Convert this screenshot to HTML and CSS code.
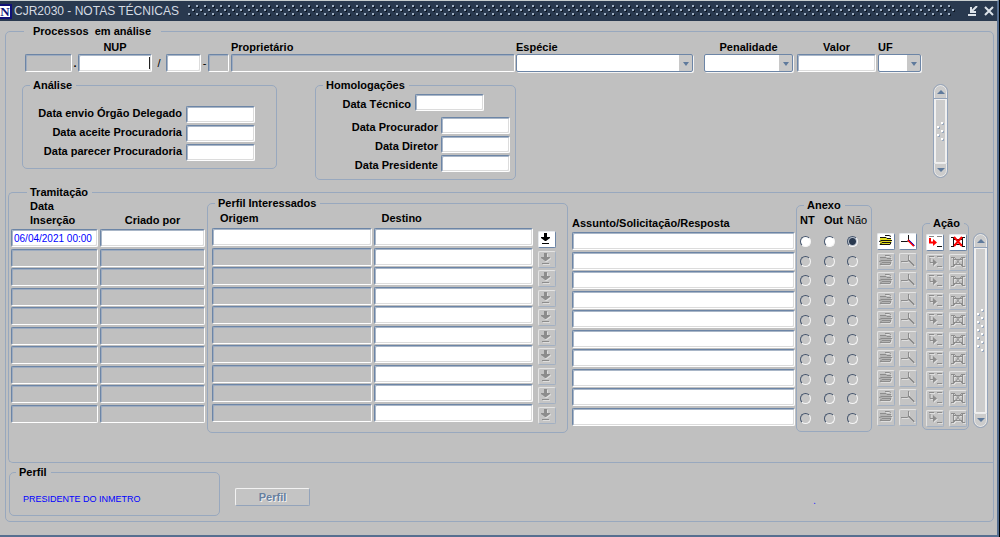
FILE: index.html
```html
<!DOCTYPE html>
<html lang="pt-BR">
<head>
<meta charset="utf-8">
<title>CJR2030 - NOTAS TÉCNICAS</title>
<link rel="stylesheet" href="styles.css">
</head>
<body>
<svg class="sprite" aria-hidden="true">
  <symbol id="i-down" viewBox="0 0 16 15">
    <path class="ink" d="M5 1h3v4h3v1L7 9H6L2 6V5h3zM3 11h7v1H3z"/>
  </symbol>
  <symbol id="i-folder" viewBox="0 0 16 15">
    <path class="fill" d="M2 10V3h6l1 1h4v2h1l-2 5H2z"/>
    <path class="line" d="M7 1.500h4l2 1M2 3.500h6l1 1h4M3 6.500h11M1 7.500l3-1M2 10.500l2-2h9l-1 2z"/>
  </symbol>
  <symbol id="i-branch" viewBox="0 0 16 15">
    <path class="line" d="M8.500 1v6M1 7.500h6l2-1"/>
    <path class="red" d="M8 6l6 6"/>
    <path class="blue" d="M9 6l5.500 5.500"/>
  </symbol>
  <symbol id="i-insert" viewBox="0 0 16 15">
    <path class="faint" d="M2 1.500h5M10 1.500h5"/>
    <path class="line" d="M10 11.500h5"/>
    <path class="red" d="M3 3v4.500h4"/>
    <path class="redfill" d="M6 4l4 3.500L6 11z"/>
  </symbol>
  <symbol id="i-delete" viewBox="0 0 16 15">
    <path class="line" d="M1 2.500h3M12 2.500h3M3.500 3v8M12.500 3v8M1 11.500h3M12 11.500h3M4 4.500h9M4 9.500h9"/>
    <path class="red" d="M4 2l8 9M12 2l-8 9"/>
  </symbol>
</svg>

<div class="window">
  <header class="titlebar">
    <span class="app-icon">N</span>
    <h1 class="title">CJR2030 - NOTAS TÉCNICAS</h1>
    <span class="bumps"></span>
    <button class="win-btn" type="button" aria-label="Minimizar">
      <svg width="10" height="10" viewBox="0 0 10 10"><path d="M9 0L4 5M3 1v5h5M0 9h8" fill="none" stroke="#dde3ea" stroke-width="2"/></svg>
    </button>
    <button class="win-btn" type="button" aria-label="Fechar">
      <svg width="10" height="10" viewBox="0 0 10 10"><path d="M1 1l8 8M9 1L1 9" fill="none" stroke="#dde3ea" stroke-width="2"/></svg>
    </button>
  </header>

  <form class="main">
    <fieldset class="group process">
      <legend class="legend-wide">Processos&nbsp; em análise</legend>

      <div class="id-row">
        <input class="field w-prefix" type="text" aria-label="Prefixo" disabled>
        <span class="sep sep-dot">.</span>
        <div class="stack centered w-nup"><label for="nup">NUP</label><input id="nup" class="field caret" type="text"></div>
        <span class="sep sep-slash">/</span>
        <input class="field w-year" type="text" aria-label="Ano">
        <span class="sep sep-dash">-</span>
        <input class="field w-digit" type="text" aria-label="Dígito" disabled>
        <div class="stack owner"><label for="prop">Proprietário</label><input id="prop" class="field" type="text" disabled></div>
        <div class="stack species"><label for="esp">Espécie</label><span class="combo"><select id="esp"><option></option></select></span></div>
        <div class="stack centered penalty"><label for="pen">Penalidade</label><span class="combo"><select id="pen"><option></option></select></span></div>
        <div class="stack centered amount"><label for="val">Valor</label><input id="val" class="field" type="text"></div>
        <div class="stack state"><label for="uf">UF</label><span class="combo"><select id="uf"><option></option></select></span></div>
      </div>

      <div class="dates-row">
        <fieldset class="group analysis">
          <legend>Análise</legend>
          <div class="analysis-grid">
            <label for="d1">Data envio Órgão Delegado</label><input id="d1" class="field date" type="text">
            <label for="d2">Data aceite Procuradoria</label><input id="d2" class="field date" type="text">
            <label for="d3">Data parecer Procuradoria</label><input id="d3" class="field date" type="text">
          </div>
        </fieldset>
        <fieldset class="group approvals">
          <legend>Homologações</legend>
          <div class="approval-first"><label for="h1">Data Técnico</label><input id="h1" class="field date" type="text"></div>
          <div class="approval-grid">
            <label for="h2">Data Procurador</label><input id="h2" class="field date" type="text">
            <label for="h3">Data Diretor</label><input id="h3" class="field date" type="text">
            <label for="h4">Data Presidente</label><input id="h4" class="field date" type="text">
          </div>
        </fieldset>
        <div class="scroll scroll-short"><button type="button" class="up" aria-label="Acima"></button><span class="thumb"><i class="grip"></i></span><button type="button" class="down" aria-label="Abaixo"></button></div>
      </div>

      <fieldset class="group flow">
        <legend>Tramitação</legend>
        <div class="flow-cols">
          <div class="col col-date">
            <div class="head head-two">Data<br>Inserção</div>
            <div class="list" data-kind="data"></div>
          </div>
          <div class="col col-author">
            <div class="head head-one">Criado por</div>
            <div class="list" data-kind="criado"></div>
          </div>
          <fieldset class="group inner interested">
            <legend>Perfil Interessados</legend>
            <div class="interested-cols">
              <div class="col grow"><div class="head">Origem</div><div class="list" data-kind="origem"></div></div>
              <div class="col grow"><div class="head">Destino</div><div class="list" data-kind="destino"></div></div>
              <div class="list small-list pick" data-kind="down"></div>
            </div>
          </fieldset>
          <div class="col subject">
            <div class="head">Assunto/Solicitação/Resposta</div>
            <div class="list" data-kind="assunto"></div>
          </div>
          <fieldset class="group inner attach">
            <legend>Anexo</legend>
            <div class="attach-head"><span>NT</span><span>Out</span><span class="plain">Não</span></div>
            <div class="list radio-list" data-kind="anexo"></div>
          </fieldset>
          <div class="list small-list tools" data-kind="tools"></div>
          <fieldset class="group inner action">
            <legend>Ação</legend>
            <div class="list small-list" data-kind="acao"></div>
          </fieldset>
          <div class="scroll scroll-long"><button type="button" class="up" aria-label="Acima"></button><span class="thumb"><i class="grip"></i></span><button type="button" class="down" aria-label="Abaixo"></button></div>
        </div>
      </fieldset>

      <div class="bottom-row">
        <fieldset class="group profile">
          <legend>Perfil</legend>
          <div class="profile-name">PRESIDENTE DO INMETRO</div>
        </fieldset>
        <button class="profile-btn" type="button" disabled>Perfil</button>
        <span class="status">.</span>
      </div>
    </fieldset>
  </form>
</div>
<script src="rows.js"></script>
</body>
</html>
```
FILE: styles.css
```css
* { box-sizing: border-box; }

body {
  margin: 0;
  border-right: 1px solid #000;
  background: #c0c0c0;
  color: #000;
  font: bold 11px/14px "Liberation Sans", Arial, sans-serif;
}

.sprite { display: none; }

.window {
  min-height: 100vh;
  display: flex;
  flex-direction: column;
  border-top: 1px solid #c9cfd0;
  border-right: 2px solid #566f90;
  border-bottom: 2px solid #566f90;
}

/* Title bar */
.titlebar {
  display: flex;
  align-items: center;
  height: 20px;
  background: #29394f;
}
.app-icon {
  width: 12px;
  height: 15px;
  border: 2px solid #101078;
  border-left-width: 0;
  background: #fff;
  color: #101078;
  font: bold 13px/11px "Liberation Serif", serif;
  text-align: center;
}
.title {
  margin: 0 9px 0 2px;
  color: #d5dbe3;
  font-size: 12px;
  font-weight: normal;
}
.bumps {
  flex: 1;
  height: 12px;
  margin-right: 9px;
  background-image:
    radial-gradient(circle at 1px 1px, #9fb0c4 0 1px, transparent 1px),
    radial-gradient(circle at 2px 2px, #0d1724 0 1px, transparent 1px),
    radial-gradient(circle at 1px 1px, #9fb0c4 0 1px, transparent 1px),
    radial-gradient(circle at 2px 2px, #0d1724 0 1px, transparent 1px);
  background-size: 8px 8px;
  background-position: 0 0, 0 0, 4px 4px, 4px 4px;
}
.win-btn {
  width: 16px;
  height: 14px;
  padding: 0;
  border: 0;
  background: none;
  line-height: 0;
}

/* Framed groups */
.main { flex: 1; padding: 3px 3px 0 5px; }
.group {
  min-width: 0;
  margin: 0;
  padding: 0;
  border: 1px solid #98a8be;
  border-radius: 5px;
}
.group > legend { margin-left: 7px; padding: 0 4px 0 3px; }
.group > .legend-wide { margin-left: 18px; padding: 0 10px 0 9px; }
.inner > legend { line-height: 8px; }

/* Fields */
.field {
  display: block;
  width: 100%;
  height: 18px;
  padding: 0;
  border: 1px solid #fff;
  border-top-color: #6c85a6;
  border-left-color: #6c85a6;
  border-radius: 2px;
  outline: 0;
  background: #fff;
  box-shadow: inset 1px 1px #a9b6c7, inset -1px -1px #dcdcdc;
  color: #00f;
  font: 10px/14px "Liberation Sans", Arial, sans-serif;
}
.field:disabled { background: #c0c0c0; box-shadow: inset 1px 1px #9dabbf; }
.caret {
  background: linear-gradient(#222, #222) right 1px center / 1px 12px no-repeat #fff;
}
.col-date .field { padding-left: 2px; }
.combo { position: relative; display: block; }
.combo select {
  appearance: none;
  display: block;
  width: 100%;
  height: 18px;
  border: 1px solid #6c85a6;
  border-radius: 2px;
  background: linear-gradient(#c8c8c8, #c8c8c8) right / 13px 100% no-repeat #fff;
  box-shadow: 1px 1px #f4f4f4;
}
.combo::after {
  content: "";
  position: absolute;
  right: 4px;
  top: 8px;
  border: 3px solid transparent;
  border-top: 4px solid #5f7a9c;
  border-bottom: 0;
}

.id-row { display: flex; align-items: flex-end; padding: 2px 72px 0 19px; }
.id-row > * { flex: none; }
.stack { display: flex; flex-direction: column; }
.centered { text-align: center; }
.w-prefix { width: 47px; }
.w-nup { width: 74px; }
.w-year { width: 35px; }
.w-digit { width: 21px; margin-right: 2px; }
.sep { text-align: center; padding-bottom: 2px; }
.sep-dot { width: 6px; }
.sep-slash { width: 14px; font-weight: normal; }
.sep-dash { width: 7px; font-weight: normal; }
.id-row > .owner { flex: 1 1 284px; margin-right: 1px; }
.id-row > .species { flex: 1 1 177px; margin-right: 11px; }
.penalty { width: 89px; margin-right: 4px; }
.amount { width: 79px; margin-right: 2px; }
.state { width: 43px; }

.dates-row { display: flex; align-items: flex-start; min-height: 101px; margin-top: 6px; padding: 0 45px 0 16px; }
.date { width: 69px; height: 17px; }
.analysis { width: 255px; }
.analysis-grid { display: grid; grid-template-columns: 1fr auto; gap: 2px 4px; padding: 14px 21px 7px 0; text-align: right; }
.approvals { width: 201px; margin-left: 38px; }
.approval-first { display: flex; gap: 4px; justify-content: flex-end; padding: 2px 31px 6px 0; }
.approval-grid { display: grid; grid-template-columns: 1fr auto; gap: 2px 3px; padding: 0 5px 7px 0; text-align: right; }
.approvals label { padding-top: 3px; }

/* Scroll bars */
.scroll {
  display: flex;
  flex-direction: column;
  flex: none;
  width: 15px;
  border: 1px solid #93a3ba;
  border-radius: 8px;
  overflow: hidden;
}
.scroll-short { height: 94px; margin: 6px 0 0 auto; }
.scroll-long { height: 195px; margin: 34px 0 0 4px; }
.scroll button {
  display: flex;
  align-items: center;
  justify-content: center;
  height: 14px;
  padding: 0;
  border: 1px solid #ececec;
  border-radius: 7px 7px 0 0;
  background: #ccc;
}
.scroll .down { border-radius: 0 0 7px 7px; }
.scroll button::before { content: ""; border: 4px solid transparent; }
.scroll .up::before { border-top-width: 0; border-bottom-color: #5f7a9c; }
.scroll .down::before { border-bottom-width: 0; border-top-color: #5f7a9c; }
.thumb {
  flex: 1;
  display: flex;
  align-items: center;
  justify-content: center;
  border: solid #f0f0f0;
  border-width: 1px 2px;
  background: #ccc;
  outline: 1px solid #93a3ba;
}
.grip {
  width: 7px;
  height: 19px;
  background-image:
    radial-gradient(circle at 1px 1px, #fff 0 1px, transparent 1px),
    radial-gradient(circle at 2px 2px, #98a8be 0 1px, transparent 1px),
    radial-gradient(circle at 1px 1px, #fff 0 1px, transparent 1px),
    radial-gradient(circle at 2px 2px, #98a8be 0 1px, transparent 1px);
  background-size: 8px 8px;
  background-position: 4px 0, 4px 0, 0 4px, 0 4px;
}
.scroll-long .grip { height: 43px; }

/* Tramitação */
.flow { margin: 5px 0 0 2px; border-right: 0; border-radius: 5px 0 0 5px; }
.group.flow > legend { margin-left: 18px; }
.flow-cols { display: flex; align-items: flex-start; padding: 0 5px 29px 2px; }
.flow-cols > * { flex: none; }
.list { display: flex; flex-direction: column; justify-content: space-between; height: 194px; }
.head { padding-left: 8px; white-space: nowrap; }
.col-date { width: 87px; margin-right: 2px; }
.head-two { padding: 0 0 2px 19px; }
.col-author { width: 105px; margin-right: 2px; }
.head-one { padding: 14px 0 2px; text-align: center; }
.flow-cols > .interested { flex: 1 1 361px; }
.interested-cols { display: flex; align-items: flex-start; gap: 2px; padding: 4px 11px 8px 4px; }
.grow { flex: 1; min-width: 0; }
.interested .head { padding-bottom: 3px; }
.small-list { height: 193px; flex: none; }
.pick { margin: 20px 0 0 3px; }
.flow-cols > .subject { flex: 1 1 223px; margin: 17px 1px 0 4px; }
.subject .head { padding: 0 0 2px; }
.attach { width: 76px; margin-top: 2px; }
.attach-head { display: grid; grid-template-columns: 24px 23px auto; padding: 4px 0 9px 3px; }
.plain { font-weight: normal; }
.radio-list { height: 188px; margin: 0 0 7px 3px; }
.radio-row { display: grid; grid-template-columns: 24px 23px auto; }
.radio-row input {
  appearance: none;
  width: 11px;
  height: 11px;
  margin: 0;
  border: 1px solid #f6f6f6;
  border-top-color: #44546c;
  border-left-color: #44546c;
  border-radius: 50%;
  background: #fff;
}
.radio-row input:disabled { background: #c6c6c6; }
.radio-row input:checked { background: radial-gradient(circle, #29394f 0 3px, #b8c0cc 4px); }
.tools { margin: 34px 5px 0; }
.btn-row { display: flex; gap: 4px; }
.action { width: 47px; margin-top: 20px; }
.action .small-list { margin: 7px 0 2px 3px; }
.action .btn-row { gap: 5px; }

.icon-btn {
  width: 18px;
  height: 17px;
  padding: 0;
  border: 1px solid #e6e9ed;
  border-right-color: #6c85a6;
  border-bottom-color: #6c85a6;
  border-radius: 2px;
  background: #fff;
  line-height: 0;
}
.icon-btn svg { width: 16px; height: 15px; fill: none; }
.ink { fill: #000; }
.fill { fill: #e3dc1c; }
.line { stroke: #111; }
.faint { stroke: #888; }
.red { stroke: #f00; stroke-width: 2; }
.blue { stroke: #1717d0; }
.redfill { fill: #f00; }
.icon-btn:disabled { border-color: #e4e4e4 #a3b0c2 #a3b0c2 #e4e4e4; background: #c4c4c4; }
.icon-btn:disabled svg { filter: drop-shadow(1px 1px 0 #dedede); }

/* Footer */
.bottom-row { display: flex; align-items: flex-start; padding: 2px 0 5px 3px; }
.profile { width: 211px; height: 51px; }
.group.profile > legend { margin-left: 6px; }
.profile-name { padding: 13px 0 0 13px; color: #00f; font: 9px/14px "Liberation Sans", Arial, sans-serif; }
.profile-btn {
  width: 75px;
  height: 18px;
  margin: 23px 0 0 15px;
  padding: 0;
  border: 1px solid #f2f2f2;
  border-right-color: #93a3ba;
  border-bottom-color: #93a3ba;
  border-radius: 2px;
  background: #c4c4c4;
  color: #667f9f;
  font: inherit;
  text-shadow: 1px 1px #f0f0f0;
}
.status { margin: 28px 177px 0 auto; color: #33f; font-weight: normal; }
```
FILE: rows.js
```js
const ROWS = 10;

const field = (label, on, value = "") =>
  `<input class="field" type="text" aria-label="${label}" value="${value}"${on ? "" : " disabled"}>`;

// Disabled buttons draw every stroke of the icon in one grey.
const icon = (id, on) => {
  let art = document.getElementById("i-" + id).innerHTML;
  if (!on) {
    art = art
      .replace(/class="(ink|redfill)"/g, 'fill="#8c8c8c"')
      .replace(/class="fill"/g, 'fill="#b4b4b4"')
      .replace(/class="\w+"/g, 'stroke="#8c8c8c"');
  }
  return `<svg viewBox="0 0 16 15">${art}</svg>`;
};
const button = (id, label, on) =>
  `<button class="icon-btn" type="button" aria-label="${label}"${on ? "" : " disabled"}>${icon(id, on)}</button>`;

const kinds = {
  data: i => field("Data Inserção", i === 0, i === 0 ? "06/04/2021 00:00" : ""),
  criado: i => field("Criado por", i === 0),
  origem: i => field("Origem", i === 0),
  destino: () => field("Destino", true),
  assunto: () => field("Assunto/Solicitação/Resposta", true),
  down: i => button("down", "Escolher destino", i === 0),
  anexo: i => `<div class="radio-row">` + ["NT", "Out", "Não"].map((n, k) =>
    `<input type="radio" name="anexo${i}" aria-label="${n}"${i ? " disabled" : k === 2 ? " checked" : ""}>`).join("") + `</div>`,
  tools: i => `<div class="btn-row">${button("folder", "Abrir", i === 0)}${button("branch", "Ramificar", i === 0)}</div>`,
  acao: i => `<div class="btn-row">${button("insert", "Inserir", i === 0)}${button("delete", "Excluir", i === 0)}</div>`
};

document.querySelectorAll("[data-kind]").forEach(list => {
  list.innerHTML = Array.from({ length: ROWS }, (_, i) => kinds[list.dataset.kind](i)).join("");
});
```
